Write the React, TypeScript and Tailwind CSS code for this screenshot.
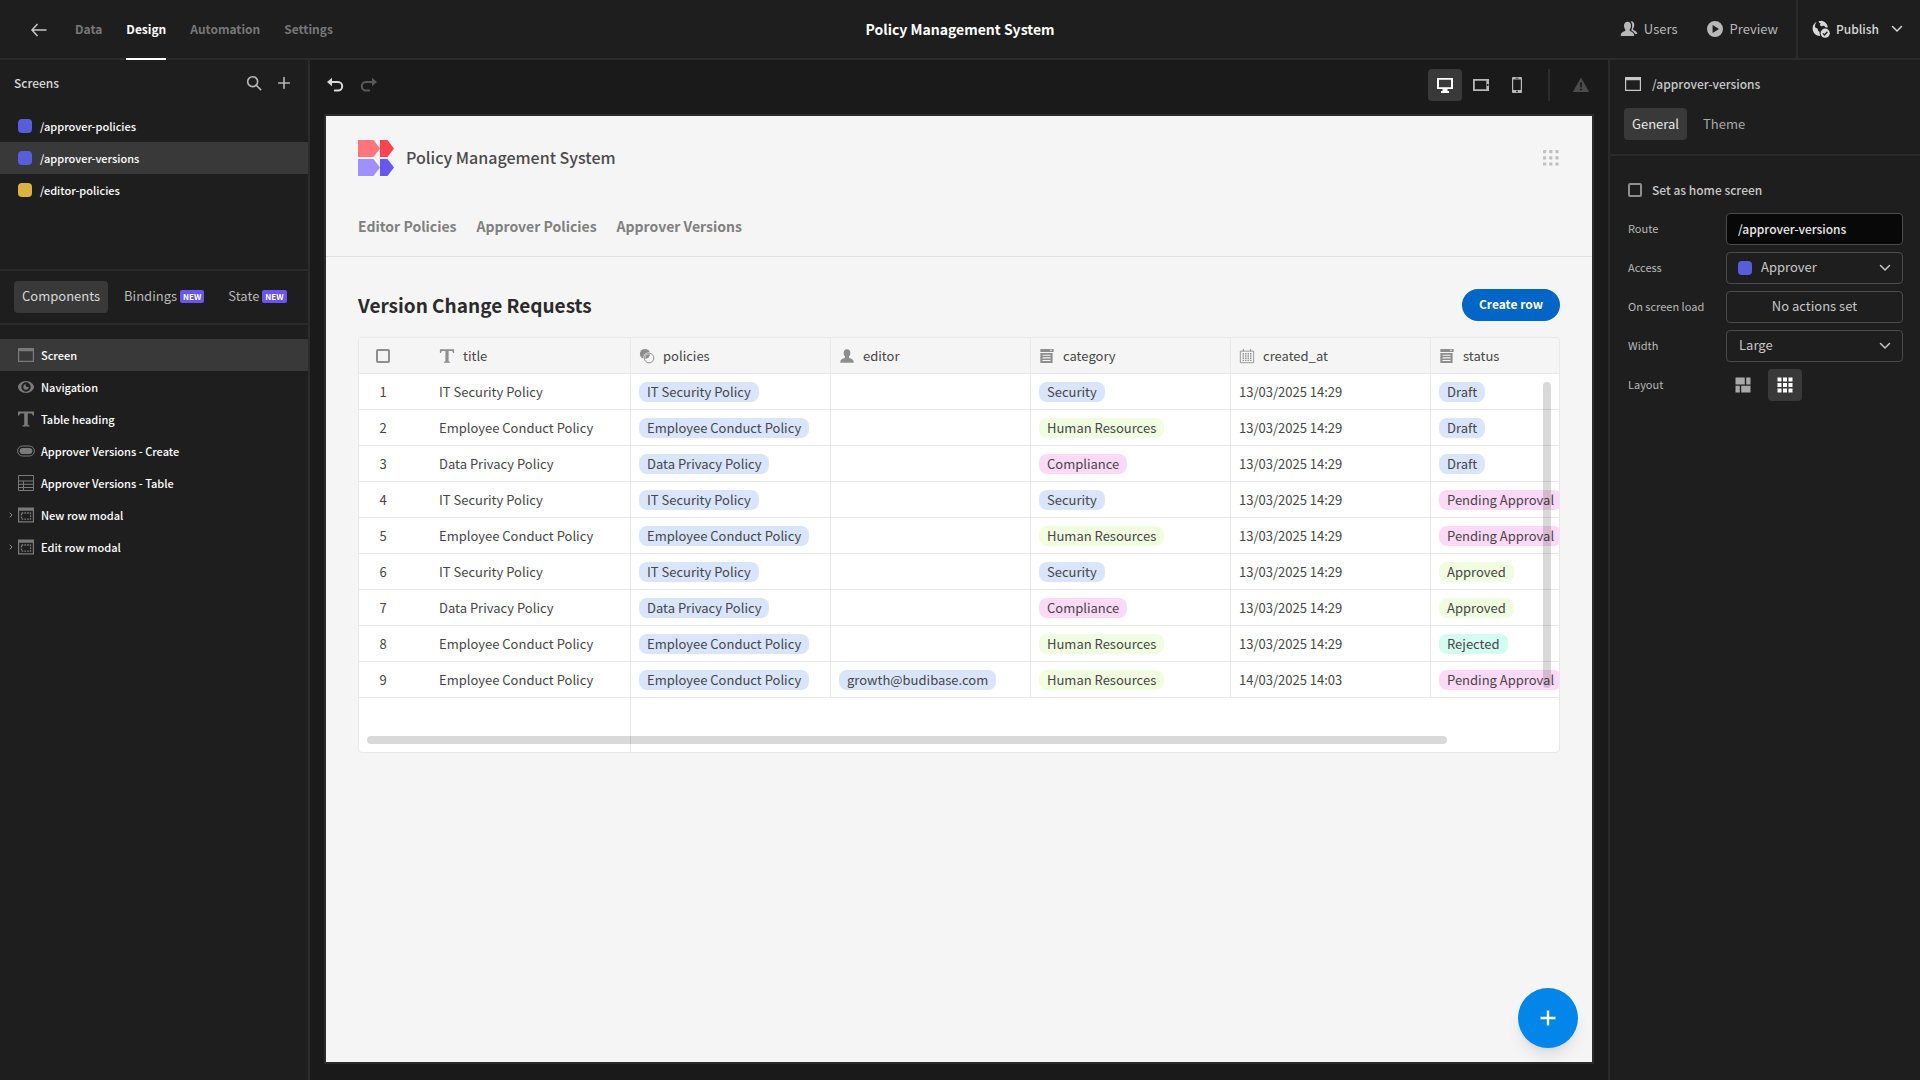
import { clsx } from "clsx";
import type { ReactNode, SVGProps } from "react";

/* ───────────────── ICONS ───────────────── */

function Icon({ children, ...props }: SVGProps<SVGSVGElement>) {
	return (
		<svg viewBox="0 0 18 18" width={18} height={18} fill="currentColor" aria-hidden="true" {...props}>
			{children}
		</svg>
	);
}

const BackIcon = () => (
	<Icon fill="none" stroke="currentColor" strokeWidth={1.5}>
		<path d="M16.5 10H2M7.5 4 2 10l5.500 6" />
	</Icon>
);

const SearchIcon = () => (
	<Icon width={16} height={16} fill="none" stroke="currentColor" strokeWidth={1.8}>
		<circle cx="7.500" cy="7.500" r="5.600" />
		<path d="m11.500 11.500 5 5" strokeLinecap="round" />
	</Icon>
);

const PlusIcon = () => (
	<Icon width={16} height={16} fill="none" stroke="currentColor" strokeWidth={1.8} strokeLinecap="round">
		<path d="M9 3v12M3 9h12" />
	</Icon>
);

const UndoIcon = () => (
	<Icon>
		<path
			d="M4.500 6H12a4.200 4.200 0 0 1 0 8.400H8.800"
			fill="none"
			stroke="currentColor"
			strokeWidth={2}
			strokeLinecap="round"
		/>
		<path d="M6 1.700v8.600L1 6z" />
	</Icon>
);

const RedoIcon = () => (
	<Icon>
		<path
			d="M13.500 6H6a4.200 4.200 0 0 0 0 8.400h3.200"
			fill="none"
			stroke="currentColor"
			strokeWidth={2}
			strokeLinecap="round"
		/>
		<path d="M12 1.700v8.600L17 6z" />
	</Icon>
);

const ChevronDownIcon = () => (
	<svg viewBox="0 0 12 8" width={12} height={8} fill="none" stroke="currentColor" aria-hidden="true">
		<path d="m1.500 1.500 4.500 4.500 4.500-4.500" strokeWidth={1.5} strokeLinecap="round" />
	</svg>
);

const ChevronRightIcon = () => (
	<svg viewBox="0 0 4 6" width={4} height={6} fill="none" stroke="currentColor" aria-hidden="true">
		<path d="m.7.6 2.400 2.400L.7 5.400" />
	</svg>
);

const DesktopIcon = () => (
	<Icon>
		<path d="M1 2h16v11h-5.500v2H13v2H5v-2h1.500v-2H1zm2 1.700v7.600h12V3.700z" fillRule="evenodd" />
	</Icon>
);

const TabletIcon = () => (
	<Icon>
		<path d="M1 3h16v12H1zm1.800 1.800v8.400h11.500V4.800z" fillRule="evenodd" />
		<circle cx="15.700" cy="9" r="1" fill="#1a1a1a" />
	</Icon>
);

const PhoneIcon = () => (
	<Icon>
		<path
			d="M5 1h8a1 1 0 0 1 1 1v14a1 1 0 0 1-1 1H5a1 1 0 0 1-1-1V2a1 1 0 0 1 1-1zm.200 2.600v10.300h7.600V3.600zM7.500 1.800v.800h3v-.800z"
			fillRule="evenodd"
		/>
		<circle cx="9" cy="15.400" r=".900" fill="#1a1a1a" />
	</Icon>
);

const AlertIcon = () => (
	<Icon>
		<path d="M9 1.500 17.200 16H.800zM8 6.500l.300 5h1.400l.300-5zM9 12.500a1 1 0 1 0 0 2 1 1 0 0 0 0-2z" fillRule="evenodd" />
	</Icon>
);

const UsersIcon = () => (
	<Icon>
		<path d="M7.500 1.800c2.300 0 3.500 1.700 3.500 4 0 1.500-.5 2.800-1.300 3.600v1.400c.3.700 4.400 1.200 4.400 4.200v1H.8v-1c0-3 4.200-3.500 4.500-4.200V9.400C4.500 8.600 4 7.300 4 5.800c0-2.300 1.200-4 3.500-4z" />
		<path d="M10.500 1.300c2.400-.3 3.800 1.400 3.800 3.700 0 1.500-.5 2.700-1.200 3.500v1.300c.3.600 4.200 1.200 4.200 4.300h-2.200c-.5-2-2.900-3-3.800-3.700V9.700c.6-1 .9-2.300.9-3.700 0-2-.600-3.600-1.700-4.700z" />
	</Icon>
);

const UserIcon = () => (
	<Icon>
		<path d="M9 1.500c2.500 0 3.800 1.700 3.800 4.100 0 1.600-.6 3-1.500 3.800v1.500c.3.700 5.200 1 5.200 4.600v1H1.500v-1c0-3.600 4.900-3.900 5.200-4.600V9.400c-.9-.8-1.500-2.200-1.500-3.800C5.200 3.200 6.500 1.500 9 1.500z" />
	</Icon>
);

const PlayIcon = () => (
	<Icon>
		<path d="M9 1a8 8 0 1 0 0 16A8 8 0 0 0 9 1zM6.600 5l6.400 4-6.400 4z" fillRule="evenodd" />
	</Icon>
);

const PublishIcon = () => (
	<Icon>
		<path d="M4.700 1.800A7.600 7.600 0 0 0 .6 8.500c0 4 3 7.300 7 7.600l.5-.6a5.600 5.600 0 0 1-.5-3.400L6 10.500l-.3-1.800L3 7.300l.2-3z" />
		<path d="M6.500 1.200 9.700.8c2.800.5 4.900 2.400 5.800 5l.1 2-2.100-.6-1.800-1.700-2 .9-1.900-1.500.9-1.400-1.500-.700z" />
		<circle cx="13.200" cy="13.200" r="4.600" />
		<path d="m10.900 13.400 1.600 1.600 2.900-3.300" fill="none" stroke="#1e1e1e" strokeWidth={1.3} />
	</Icon>
);

const ScreenIcon = () => (
	<Icon>
		<path d="M1 2h16v14H1zm1.200 3.200v9.600h13.600V5.200z" fillRule="evenodd" />
	</Icon>
);

const EyeIcon = () => (
	<Icon>
		<path
			d="M9 3c4.600 0 8 3.600 8 6s-3.400 6-8 6-8-3.600-8-6 3.400-6 8-6zm0 1.300A4.700 4.700 0 1 0 9 13.700 4.700 4.700 0 0 0 9 4.300z"
			fillRule="evenodd"
		/>
		<path d="M9 6.300 8.600 8 10 9.200l1.700-.4A2.700 2.700 0 1 1 9 6.300z" />
	</Icon>
);

const TextIcon = () => (
	<Icon>
		<path d="M1 1.500h16v4h-1.300c-.2-1.500-.7-2-2.200-2h-2.700v10.800c0 .8.500 1 1.700 1.200v1h-7v-1c1.200-.2 1.700-.4 1.700-1.200V3.500H4.500c-1.500 0-2 .5-2.200 2H1z" />
	</Icon>
);

const ButtonIcon = () => (
	<Icon>
		<rect x=".6" y="4" width="16.800" height="10" rx="5" fill="none" stroke="currentColor" />
		<rect x="2.600" y="6" width="12.800" height="6" rx="3" />
	</Icon>
);

const TableIcon = () => (
	<Icon fill="none" stroke="currentColor">
		<path d="M1.500 1.500h15v15h-15zM1.500 7h15M1.500 10.300h15M1.500 13.500h15M6.500 7v9.500" />
	</Icon>
);

const ModalIcon = () => (
	<Icon>
		<path d="M1 1.500h16v15H1zm1.200 3.300v10.500h13.600V4.800z" fillRule="evenodd" />
		<path d="M4.500 7h9v6.200h-9z" fill="none" stroke="currentColor" strokeWidth={1.300} strokeDasharray="1.800 1" />
	</Icon>
);

const RelationIcon = () => (
	<Icon>
		<circle cx="6.700" cy="6.700" r="5.700" />
		<circle cx="11.300" cy="11.300" r="5.400" fill="none" stroke="#f5f5f5" strokeWidth={2.400} />
		<circle cx="11.300" cy="11.300" r="5.400" fill="none" stroke="currentColor" strokeWidth={1.100} />
	</Icon>
);

const OptionsIcon = () => (
	<Icon>
		<path
			d="M1.500 1h15v3.500h-15zM12 2l1.400 1.700L14.800 2zM1.500 5.500h13.800V17H1.500zM4 7.500v1.200h9V7.500zm0 3v1.200h9v-1.200zm0 3v1.200h9v-1.200z"
			fillRule="evenodd"
		/>
	</Icon>
);

const CalendarIcon = () => (
	<Icon>
		<path d="M1.500 3.500h15v13h-15zM5 1v3M13 1v3" fill="none" stroke="currentColor" />
		<path d="M4 6.500h10M4 9h10M4 11.500h10M4 14h10" stroke="currentColor" strokeWidth={1.500} strokeDasharray="1.600 1.200" />
	</Icon>
);

const DotsIcon = () => (
	<Icon>
		{[1, 7.200, 13.400].map((y) =>
			[1, 7.200, 13.400].map((x) => <rect key={`${x}-${y}`} x={x} y={y} width="3.200" height="3.200" rx=".6" />),
		)}
	</Icon>
);

const FlowLayoutIcon = () => (
	<Icon>
		<path d="M1.500 1.500h9.300v7H1.500zM12.200 1.500h4.300v7h-4.300zM1.500 9.800h4.300v6.700H1.500zM7.200 9.800h9.300v6.700H7.200z" />
	</Icon>
);

const GridLayoutIcon = () => (
	<Icon>
		{[1.500, 7, 12.500].map((y) =>
			[1.500, 7, 12.500].map((x) => <rect key={`${x}-${y}`} x={x} y={y} width="4" height="4" />),
		)}
	</Icon>
);

const Logo = () => (
	<svg viewBox="0 0 36 36" className="size-9" role="img" aria-label="Logo">
		<path d="M0 0h15.500L22 8.500 15.500 17H0z" fill="#ff7579" />
		<path d="M22 0h7.500L36 8.500 29.500 17H22z" fill="#ff4450" />
		<path d="M0 19h15.500l6.500 8.500-6.500 8.500H0z" fill="#9f8fff" />
		<path d="M22 19h7.500l6.500 8.500-6.500 8.500H22z" fill="#6a55f5" />
	</svg>
);

/* ───────────────── DATA ───────────────── */

const screens = [
	{ route: "/approver-policies", color: "bg-[#565edc]" },
	{ route: "/approver-versions", color: "bg-[#565edc]", selected: true },
	{ route: "/editor-policies", color: "bg-[#dcb341]" },
];

const components = [
	{ name: "Screen", icon: <ScreenIcon />, selected: true },
	{ name: "Navigation", icon: <EyeIcon /> },
	{ name: "Table heading", icon: <TextIcon /> },
	{ name: "Approver Versions - Create", icon: <ButtonIcon /> },
	{ name: "Approver Versions - Table", icon: <TableIcon /> },
	{ name: "New row modal", icon: <ModalIcon />, nested: true },
	{ name: "Edit row modal", icon: <ModalIcon />, nested: true },
];

const columns = [
	{ name: "title", icon: <TextIcon /> },
	{ name: "policies", icon: <RelationIcon /> },
	{ name: "editor", icon: <UserIcon /> },
	{ name: "category", icon: <OptionsIcon /> },
	{ name: "created_at", icon: <CalendarIcon /> },
	{ name: "status", icon: <OptionsIcon /> },
];

const rows = [
	["IT Security Policy", "", "Security", "13/03/2025 14:29", "Draft"],
	["Employee Conduct Policy", "", "Human Resources", "13/03/2025 14:29", "Draft"],
	["Data Privacy Policy", "", "Compliance", "13/03/2025 14:29", "Draft"],
	["IT Security Policy", "", "Security", "13/03/2025 14:29", "Pending Approval"],
	["Employee Conduct Policy", "", "Human Resources", "13/03/2025 14:29", "Pending Approval"],
	["IT Security Policy", "", "Security", "13/03/2025 14:29", "Approved"],
	["Data Privacy Policy", "", "Compliance", "13/03/2025 14:29", "Approved"],
	["Employee Conduct Policy", "", "Human Resources", "13/03/2025 14:29", "Rejected"],
	["Employee Conduct Policy", "growth@budibase.com", "Human Resources", "14/03/2025 14:03", "Pending Approval"],
];

const pillColors: Record<string, string> = {
	"Human Resources": "bg-[#f0fde0]",
	Approved: "bg-[#f0fde0]",
	Compliance: "bg-[#fdd9f8]",
	"Pending Approval": "bg-[#fdd9f8]",
	Rejected: "bg-[#d4fdf2]",
};

/* ───────────────── SHARED ───────────────── */

function Pill({ text }: { text: string }) {
	return (
		<span className={clsx("inline-block h-5 rounded-lg px-2 align-middle leading-5", pillColors[text] ?? "bg-[#d9e5fd]")}>
			{text}
		</span>
	);
}

function Cell({ children }: { children?: ReactNode }) {
	return <td className="h-9 border-r border-b border-[#e8e8e8] px-2 whitespace-nowrap">{children}</td>;
}

function NewBadge() {
	return <span className="rounded-xs bg-[#6a55f0] px-[3px] text-[8px] leading-[13px] font-bold text-white">NEW</span>;
}

function Field({ id, label, children }: { id: string; label: string; children: ReactNode }) {
	return (
		<div className="grid grid-cols-[98px_1fr] items-center">
			<label htmlFor={id} className="pb-0.5 text-[11px] text-[#b8b8b8]">
				{label}
			</label>
			<div className="relative flex gap-2">{children}</div>
		</div>
	);
}

const fieldClass = "h-8 w-full appearance-none rounded border border-[#4b4b4b] pb-0.5 text-[#c8c8c8]";

/* ───────────────── SECTIONS ───────────────── */

function TopBar() {
	const tabs = ["Data", "Design", "Automation", "Settings"];
	return (
		<header className="grid h-[60px] shrink-0 grid-cols-[1fr_auto_1fr] border-b-2 border-[#2b2b2b]">
			<nav className="flex items-stretch gap-6 pl-[30px] text-xs font-bold">
				<button type="button" aria-label="Back" className="mr-[3px] text-[#c8c8c8]">
					<BackIcon />
				</button>
				{tabs.map((tab) => (
					<a
						key={tab}
						href="#"
						className={clsx(
							"-mb-0.5 flex items-center border-b-2",
							tab === "Design" ? "border-white text-white" : "border-transparent text-[#777777]",
						)}
					>
						{tab}
					</a>
				))}
			</nav>
			<h1 className="self-center text-sm font-bold text-white">Policy Management System</h1>
			<div className="flex justify-end text-[#b8b8b8]">
				<button type="button" className="flex items-center gap-1.5 px-3">
					<UsersIcon />
					Users
				</button>
				<button type="button" className="mr-1.5 ml-1 flex items-center gap-1.5 px-3">
					<PlayIcon />
					Preview
				</button>
				<button
					type="button"
					className="flex items-center gap-1.5 border-l-2 border-[#2b2b2b] pr-[17px] pl-3.5 text-xs font-medium text-[#d8d8d8]"
				>
					<PublishIcon />
					Publish
					<span className="ml-1.5">
						<ChevronDownIcon />
					</span>
				</button>
			</div>
		</header>
	);
}

function LeftPanel() {
	return (
		<aside className="flex w-[310px] shrink-0 flex-col border-r-2 border-[#2b2b2b]">
			<section className="h-[211px] border-b-2 border-[#2b2b2b]">
				<div className="mb-1 flex h-[46px] items-center pr-4 pl-3.5 text-[#b8b8b8]">
					<h2 className="flex-1 text-xs font-medium text-[#d8d8d8]">Screens</h2>
					<button type="button" aria-label="Search screens" className="mr-3.5">
						<SearchIcon />
					</button>
					<button type="button" aria-label="Add screen">
						<PlusIcon />
					</button>
				</div>
				<ul>
					{screens.map((screen) => (
						<li key={screen.route}>
							<a
								href="#"
								className={clsx(
									"flex h-8 items-center gap-2 px-[18px] text-[11px] font-medium text-white",
									screen.selected && "bg-[#393939]",
								)}
							>
								<span className={clsx("size-3.5 rounded", screen.color)} />
								{screen.route}
							</a>
						</li>
					))}
				</ul>
			</section>
			<div className="flex gap-2 border-b-2 border-[#2b2b2b] px-3.5 py-2.5 text-[#b8b8b8]">
				<button type="button" className="h-8 rounded bg-[#393939] px-2 pb-0.5 text-[#d8d8d8]">
					Components
				</button>
				<button type="button" className="flex h-8 items-center gap-[3px] px-2 pb-0.5">
					Bindings <NewBadge />
				</button>
				<button type="button" className="flex h-8 items-center gap-[3px] px-2 pb-0.5">
					State <NewBadge />
				</button>
			</div>
			<ul className="pt-3.5">
				{components.map((component) => (
					<li key={component.name}>
						<a
							href="#"
							className={clsx(
								"flex h-8 items-center text-[11px] font-medium text-white",
								component.selected && "bg-[#393939]",
							)}
						>
							<span className="flex w-[17px] justify-end pr-1 text-[#8e8e8e]">
								{component.nested && <ChevronRightIcon />}
							</span>
							<span className="mr-1.5 text-[#7a7a7a]">{component.icon}</span>
							{component.name}
						</a>
					</li>
				))}
			</ul>
		</aside>
	);
}

function Grid() {
	return (
		<div className="relative mt-4 overflow-hidden rounded border border-[#e8e8e8] bg-white text-[#464646]">
			<table className="w-[1272px] table-fixed border-separate border-spacing-0">
				<thead className="bg-[#f5f5f5]">
					<tr>
						<th className="h-9 w-[72px] border-b border-[#e8e8e8] pr-6">
							<input
								type="checkbox"
								aria-label="Select all rows"
								className="mx-auto block size-3.5 appearance-none rounded-xs border-2 border-[#8e8e8e]"
							/>
						</th>
						{columns.map((column) => (
							<th key={column.name} className="h-9 border-r border-b border-[#e8e8e8] px-2 text-left font-normal">
								<span className="flex items-center gap-2">
									<span className="text-[#8e8e8e] [&>svg]:size-4">{column.icon}</span>
									{column.name}
								</span>
							</th>
						))}
					</tr>
				</thead>
				<tbody>
					{rows.map(([title, editor, category, createdAt, status], i) => (
						<tr key={i}>
							<td className="h-9 border-b border-[#e8e8e8] pr-6 text-center">{i + 1}</td>
							<Cell>{title}</Cell>
							<Cell>
								<Pill text={title} />
							</Cell>
							<Cell>{editor && <Pill text={editor} />}</Cell>
							<Cell>
								<Pill text={category} />
							</Cell>
							<Cell>{createdAt}</Cell>
							<Cell>
								<Pill text={status} />
							</Cell>
						</tr>
					))}
					<tr>
						<td colSpan={2} className="h-[54px] border-r border-[#e8e8e8]" />
						<td colSpan={5} />
					</tr>
				</tbody>
			</table>
			{/* Scrollbars float over the cells */}
			<div className="absolute top-11 right-2 bottom-16 w-2 rounded bg-black/15" />
			<div className="absolute bottom-2 left-2 h-2 w-[90%] rounded bg-black/15" />
		</div>
	);
}

function Canvas() {
	return (
		<main className="flex min-w-0 flex-1 flex-col bg-[#1a1a1a] px-3.5 pb-4">
			<div className="mb-1 flex h-[50px] shrink-0 items-center text-[#b8b8b8]">
				<button type="button" aria-label="Undo" className="mr-4 ml-0.5 text-[#d8d8d8]">
					<UndoIcon />
				</button>
				<button type="button" aria-label="Redo" className="mr-auto text-[#5a5a5a]">
					<RedoIcon />
				</button>
				<button
					type="button"
					aria-label="Desktop"
					className="flex h-8 w-[34px] items-center justify-center rounded bg-[#393939] text-white"
				>
					<DesktopIcon />
				</button>
				<button type="button" aria-label="Tablet" className="ml-0.5 flex h-8 w-[34px] items-center justify-center">
					<TabletIcon />
				</button>
				<button type="button" aria-label="Mobile" className="ml-0.5 flex h-8 w-[34px] items-center justify-center">
					<PhoneIcon />
				</button>
				<span className="ml-3.5 h-8 w-0.5 bg-[#2b2b2b]" />
				<button type="button" aria-label="Errors" className="mr-1 ml-[22px] text-[#4b4b4b]">
					<AlertIcon />
				</button>
			</div>

			<div className="relative flex-1 border-2 border-[#2b2b2b] bg-[#f5f5f5]">
				<header className="border-b border-[#e0e0e0] px-8 pt-6 pb-[18px]">
					<div className="flex h-9 items-center gap-3 text-[#4b4b4b]">
						<Logo />
						<h2 className="flex-1 pb-0.5 text-base font-medium">Policy Management System</h2>
						<button type="button" aria-label="Apps" className="text-[#c0c0c0]">
							<DotsIcon />
						</button>
					</div>
					<nav className="mt-[38px] flex gap-5 text-sm leading-6 font-bold text-[#808080]">
						<a href="#">Editor Policies</a>
						<a href="#">Approver Policies</a>
						<a href="#">Approver Versions</a>
					</nav>
				</header>
				<section className="px-8 pt-8">
					<div className="flex h-8 items-center justify-between">
						<h3 className="text-[19px] font-bold text-[#2b2b2b]">Version Change Requests</h3>
						<button type="button" className="h-8 rounded-full bg-[#0265c8] px-[17px] pb-0.5 text-xs font-bold text-white">
							Create row
						</button>
					</div>
					<Grid />
				</section>
				<button
					type="button"
					aria-label="Add"
					className="absolute right-3.5 bottom-3.5 flex size-[60px] items-center justify-center rounded-full bg-[#0286ea] text-white shadow-lg"
				>
					<svg viewBox="0 0 16 16" width={16} height={16} stroke="currentColor" strokeWidth={2.400} aria-hidden="true">
						<path d="M8 .5v15M.5 8h15" />
					</svg>
				</button>
			</div>
		</main>
	);
}

function RightPanel() {
	return (
		<aside className="w-[312px] shrink-0 border-l-2 border-[#2b2b2b] text-[#c8c8c8]">
			<div className="border-b-2 border-[#2b2b2b] px-3.5 pb-3.5">
				<div className="flex h-12 items-center gap-2.5">
					<ScreenIcon />
					<h2 className="text-xs font-medium">/approver-versions</h2>
				</div>
				<div className="flex gap-2">
					<button type="button" className="h-8 rounded bg-[#393939] px-2 text-[#e8e8e8]">
						General
					</button>
					<button type="button" className="h-8 px-2 text-[#a8a8a8]">
						Theme
					</button>
				</div>
			</div>
			<form className="flex flex-col gap-[7px] pt-[18px] pr-[17px] pl-[18px]">
				<label className="flex h-8 items-center gap-2.5 text-xs font-medium">
					<input type="checkbox" className="size-3.5 appearance-none rounded-xs border-2 border-[#8e8e8e]" />
					Set as home screen
				</label>
				<Field id="route" label="Route">
					<input
						id="route"
						defaultValue="/approver-versions"
						className={clsx(fieldClass, "bg-[#080808] px-[11px] text-xs font-medium text-[#e8e8e8]")}
					/>
				</Field>
				<Field id="access" label="Access">
					<select id="access" className={clsx(fieldClass, "pr-3 pl-[34px]")}>
						<option>Approver</option>
					</select>
					<span className="pointer-events-none absolute top-[9px] left-3 size-3.5 rounded bg-[#565edc]" />
					<span className="pointer-events-none absolute top-3 right-3">
						<ChevronDownIcon />
					</span>
				</Field>
				<Field id="load" label="On screen load">
					<button id="load" type="button" className={clsx(fieldClass, "px-3")}>
						No actions set
					</button>
				</Field>
				<Field id="width" label="Width">
					<select id="width" className={clsx(fieldClass, "px-3")}>
						<option>Large</option>
					</select>
					<span className="pointer-events-none absolute top-3 right-3">
						<ChevronDownIcon />
					</span>
				</Field>
				<Field id="layout" label="Layout">
					<button
						id="layout"
						type="button"
						aria-label="Flex layout"
						className="flex h-8 w-[34px] items-center justify-center text-[#a8a8a8]"
					>
						<FlowLayoutIcon />
					</button>
					<button
						type="button"
						aria-label="Grid layout"
						className="flex h-8 w-[34px] items-center justify-center rounded bg-[#393939] text-white"
					>
						<GridLayoutIcon />
					</button>
				</Field>
			</form>
		</aside>
	);
}

export default function App() {
	return (
		<div className="flex min-h-screen flex-col bg-[#1e1e1e] font-['Noto_Sans_CJK_SC',sans-serif] text-[13px] leading-5">
			<TopBar />
			<div className="flex flex-1">
				<LeftPanel />
				<Canvas />
				<RightPanel />
			</div>
		</div>
	);
}
